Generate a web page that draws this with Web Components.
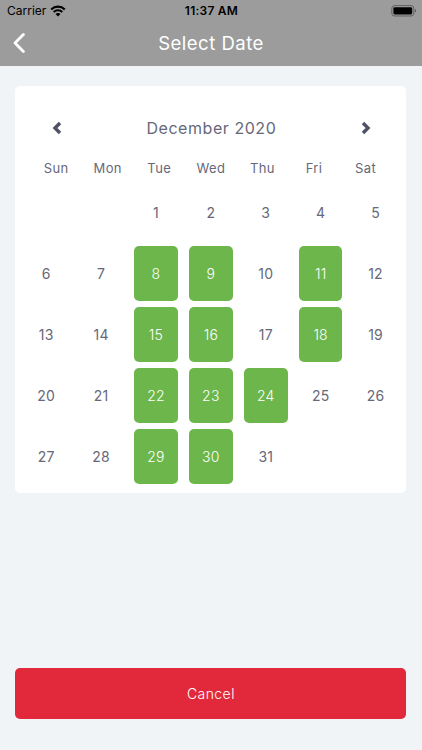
<!DOCTYPE html>
<html lang="en">
<head>
  <meta charset="utf-8">
  <meta name="viewport" content="width=device-width, initial-scale=1">
  <title>Select Date</title>
  <style>
    body {
      margin: 0;
      background: #f0f4f7;
      font-family: Inter, "Liberation Sans", sans-serif;
    }
  </style>
</head>
<body>
  <date-screen></date-screen>

  <script>
    class StatusBar extends HTMLElement {
      constructor () {
        super();
        this.attachShadow({mode: 'open'});
        this.shadowRoot.innerHTML = `
          <style>
            :host {
              display: grid;
              grid-template-columns: 1fr auto 1fr;
              align-items: center;
              height: 22px;
              padding: 0 6px 0 7px;
              color: #000;
              font-size: 12px;
              line-height: 22px;
            }
            .carrier {
              display: flex;
              align-items: center;
              gap: 4px;
            }
            .time {
              font-weight: 600;
              letter-spacing: 0.25px;
            }
            .battery {
              justify-self: end;
            }
            svg {
              display: block;
            }
          </style>
          <span class="carrier">
            <slot name="carrier"></slot>
            <svg width="16" height="12" viewBox="0 0 16 12">
              <path d="M1.2 4.4a9.7 9.7 0 0 1 13.6 0M3.7 7a6.2 6.2 0 0 1 8.6 0" fill="none" stroke="#000" stroke-width="2.1"/>
              <path d="M8 11.6L5.5 9.1a3.6 3.6 0 0 1 5 0z"/>
            </svg>
          </span>
          <span class="time"><slot name="time"></slot></span>
          <svg class="battery" width="26" height="12" viewBox="0 0 26 12">
            <rect x="1.8" y="0.6" width="22" height="10.4" rx="2.8" fill="none" stroke="#606060"/>
            <rect x="3.4" y="2.2" width="18.8" height="7.2" rx="1.4"/>
            <path d="M25 4v3.6q1-.6 1-1.8t-1-1.8z" fill="#505050"/>
          </svg>
        `;
      }
    }

    class NavHeader extends HTMLElement {
      constructor () {
        super();
        this.attachShadow({mode: 'open'});
        this.shadowRoot.innerHTML = `
          <style>
            :host {
              display: block;
              height: 66px;
              background: #9c9c9c;
              color: #fff;
            }
            .bar {
              display: grid;
              grid-template-columns: 40px 1fr 40px;
              align-items: center;
              height: 42px;
            }
            svg {
              display: block;
              margin-left: 12px;
            }
            h1 {
              margin: 0;
              font-size: 18.5px;
              font-weight: 400;
              letter-spacing: 0.5px;
              text-align: center;
            }
          </style>
          <slot name="status"></slot>
          <div class="bar">
            <svg width="14" height="20" viewBox="0 0 14 20">
              <path d="M11.4 1.6L3 10l8.4 8.4" fill="none" stroke="#fff" stroke-width="2.8" stroke-linecap="round" stroke-linejoin="round"/>
            </svg>
            <h1><slot></slot></h1>
          </div>
        `;
      }
    }

    class CalendarDay extends HTMLElement {
      constructor () {
        super();
        this.attachShadow({mode: 'open'});
        this.shadowRoot.innerHTML = `
          <style>
            :host {
              display: flex;
              align-items: center;
              justify-content: center;
              height: 55px;
              border-radius: 5px;
              font-size: 14px;
              letter-spacing: 0.2px;
            }
            :host([available]) {
              background: #6cb64b;
              color: #fff;
              font-weight: 300;
            }
          </style>
          <slot></slot>
        `;
      }
    }

    class MonthCalendar extends HTMLElement {
      constructor () {
        super();
        this.attachShadow({mode: 'open'});
      }

      connectedCallback () {
        this.renderMonth();
      }

      renderMonth () {
        const year = Number(this.getAttribute('year'));
        const month = Number(this.getAttribute('month'));
        const available = this.getAttribute('available').split(' ').map(Number);
        const title = new Date(year, month - 1, 1).toLocaleString('en-US', {month: 'long'}) + ' ' + year;
        const offset = new Date(year, month - 1, 1).getDay();
        const count = new Date(year, month, 0).getDate();

        const weekdays = ['Sun', 'Mon', 'Tue', 'Wed', 'Thu', 'Fri', 'Sat']
          .map(name => `<span>${name}</span>`).join('');
        let days = '';
        for (let day = 1; day <= count; day++) {
          const start = day === 1 ? `style="grid-column-start: ${offset + 1}"` : '';
          days += `<calendar-day ${start} ${available.includes(day) ? 'available' : ''}>${day}</calendar-day>`;
        }

        this.shadowRoot.innerHTML = `
          <style>
            :host {
              display: block;
              box-sizing: border-box;
              height: 407px;
              padding: 23px 9px 0;
              border-radius: 5px;
              background: #fff;
              color: #666879;
              font-weight: 400;
            }
            .month {
              display: flex;
              align-items: center;
              justify-content: space-between;
              height: 38px;
              padding: 0 25.5px 0 26.5px;
            }
            h2 {
              margin: 0;
              font-size: 16px;
              font-weight: 400;
              letter-spacing: 0.55px;
            }
            svg {
              display: block;
            }
            .weekdays {
              display: grid;
              grid-template-columns: repeat(7, 1fr);
              height: 42px;
              padding: 0 6px;
              font-size: 13px;
              line-height: 42px;
              letter-spacing: 0.4px;
              text-align: center;
            }
            .days {
              display: grid;
              grid-template-columns: repeat(7, 43.6px);
              justify-content: space-between;
              row-gap: 6px;
              margin-top: -4px;
            }
          </style>
          <div class="month">
            <svg width="12" height="14" viewBox="0 0 12 14">
              <path d="M9 2L4 7l5 5" fill="none" stroke="#4f5165" stroke-width="3.4"/>
            </svg>
            <h2>${title}</h2>
            <svg width="12" height="14" viewBox="0 0 12 14">
              <path d="M3 2l5 5-5 5" fill="none" stroke="#4f5165" stroke-width="3.4"/>
            </svg>
          </div>
          <div class="weekdays">${weekdays}</div>
          <div class="days">${days}</div>
        `;
      }
    }

    class ActionButton extends HTMLElement {
      constructor () {
        super();
        this.attachShadow({mode: 'open'});
        this.shadowRoot.innerHTML = `
          <style>
            :host {
              display: block;
            }
            button {
              display: block;
              width: 100%;
              height: 51px;
              padding: 0;
              border: 0;
              border-radius: 5px;
              background: #e2293c;
              color: #fff;
              font: inherit;
              font-size: 14px;
              font-weight: 300;
              letter-spacing: 0.45px;
            }
          </style>
          <button type="button"><slot></slot></button>
        `;
      }
    }

    class DateScreen extends HTMLElement {
      constructor () {
        super();
        this.attachShadow({mode: 'open'});
        this.shadowRoot.innerHTML = `
          <style>
            :host {
              display: flex;
              flex-direction: column;
              height: 100vh;
            }
            main {
              flex: 1;
              display: flex;
              flex-direction: column;
              justify-content: space-between;
              padding: 20px 15.6px 31px 15.4px;
            }
          </style>
          <nav-header>
            <status-bar slot="status">
              <span slot="carrier">Carrier</span>
              <span slot="time">11:37 AM</span>
            </status-bar>
            Select Date
          </nav-header>
          <main>
            <month-calendar year="2020" month="12" available="8 9 11 15 16 18 22 23 24 29 30"></month-calendar>
            <action-button>Cancel</action-button>
          </main>
        `;
      }
    }

    window.customElements.define('status-bar', StatusBar);
    window.customElements.define('nav-header', NavHeader);
    window.customElements.define('calendar-day', CalendarDay);
    window.customElements.define('month-calendar', MonthCalendar);
    window.customElements.define('action-button', ActionButton);
    window.customElements.define('date-screen', DateScreen);
  </script>
</body>
</html>
